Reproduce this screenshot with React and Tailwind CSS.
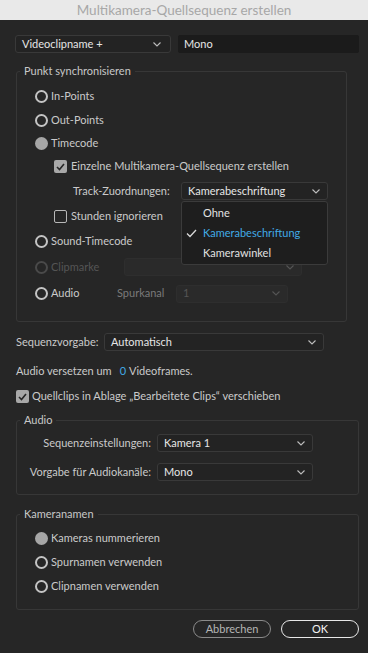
import React from "react";

const Chevron = ({ className = "" }) => (
  <svg width="8" height="5" viewBox="0 0 8 5" className={className}>
    <polyline points="0.5,0.5 4,4 7.5,0.5" fill="none" stroke="currentColor" strokeWidth="1.1" />
  </svg>
);

function Radio({ state = "off" }) {
  if (state === "on") return <span className="block w-[13px] h-[13px] shrink-0 rounded-full bg-[#a6a6a6]" />;
  if (state === "disabled") return <span className="block w-[13px] h-[13px] shrink-0 rounded-full border-2 border-[#4a4a4a]" />;
  return <span className="block w-[13px] h-[13px] shrink-0 rounded-full border-2 border-[#c4c4c4]" />;
}

function Checkbox({ checked }) {
  return checked ? (
    <span className="flex w-[13px] h-[13px] shrink-0 items-center justify-center rounded-[2px] bg-[#a8a8a8]">
      <svg width="9" height="8" viewBox="0 0 9 8">
        <polyline points="1,4 3.5,6.5 8,1" fill="none" stroke="#262626" strokeWidth="1.6" />
      </svg>
    </span>
  ) : (
    <span className="block w-[13px] h-[13px] shrink-0 rounded-[2px] border-[1.5px] border-[#b8b8b8]" />
  );
}

function Select({ value, className = "", disabled = false }) {
  return (
    <div
      className={`flex h-[18px] shrink-0 items-center justify-between rounded-[3px] border pl-[6px] pr-[7px] ${
        disabled ? "border-[#2e2e2e] bg-[#2a2a2a] text-[#555]" : "border-[#393939] bg-[#232323] text-[#e6e6e6]"
      } ${className}`}
    >
      <span className="whitespace-nowrap">{value}</span>
      <Chevron className={disabled ? "text-[#555]" : "text-[#bdbdbd]"} />
    </div>
  );
}

function Fieldset({ legend, className = "", children }) {
  return (
    <fieldset className={`rounded-[3px] border border-[#373737] ${className}`}>
      <legend className="ml-[3px] px-[4px] leading-4 text-[#c8c8c8]">{legend}</legend>
      {children}
    </fieldset>
  );
}

export default function App() {
  return (
    <div className="relative h-[653px] w-[368px] overflow-hidden whitespace-nowrap bg-[#262626] text-[11px] text-[#cacaca] [font-family:Lato,sans-serif]">
      <div className="flex h-[20px] items-center justify-center bg-[#e9e9e9] text-[13.5px] text-[#a7a7a7]">
        Multikamera-Quellsequenz erstellen
      </div>

      <div className="pl-[15px] pr-[9px]">
        <div className="mt-[15px] flex h-[18px] items-center">
          <Select value="Videoclipname +" className="w-[156px] pr-[9px]" />
          <div className="ml-[7px] flex h-[18px] flex-1 items-center rounded-[2px] bg-[#1b1b1b] pl-[6px] text-[#e6e6e6]">Mono</div>
        </div>

        <Fieldset legend="Punkt synchronisieren" className="ml-[1px] mt-[10px] w-[331px] pb-[14px]">
          <div className="pl-[18px] pt-[5px]">
            <div className="flex h-[24px] items-center gap-[3px]">
              <Radio /> <span>In-Points</span>
            </div>
            <div className="flex h-[24px] items-center gap-[3px]">
              <Radio /> <span>Out-Points</span>
            </div>
            <div className="flex h-[23px] items-center gap-[3px]">
              <Radio state="on" /> <span>Timecode</span>
            </div>
            <div className="flex h-[23px] items-center gap-[4px] pl-[19px]">
              <Checkbox checked /> <span>Einzelne Multikamera-Quellsequenz erstellen</span>
            </div>
            <div className="flex h-[26px] items-center pl-[38px]">
              <span className="w-[108px] shrink-0">Track-Zuordnungen:</span>
              <div className="relative w-[147px] shrink-0">
                <Select value="Kamerabeschriftung" />
                <div className="absolute left-0 top-full z-10 mt-[1px] w-full rounded-[3px] border border-[#3b3b3b] bg-[#1e1e1e] py-[1px] text-[#e2e2e2]">
                  <div className="flex h-[20px] items-center pl-[21px]">Ohne</div>
                  <div className="relative flex h-[20px] items-center pl-[21px] text-[#41aae6]">
                    <svg width="11" height="9" viewBox="0 0 11 9" className="absolute left-[4px] top-[6px]">
                      <polyline points="1,4.5 4,7.5 10,1" fill="none" stroke="#d8d8d8" strokeWidth="1.3" />
                    </svg>
                    Kamerabeschriftung
                  </div>
                  <div className="flex h-[20px] items-center pl-[21px]">Kamerawinkel</div>
                </div>
              </div>
            </div>
            <div className="flex h-[25px] items-center gap-[4px] pl-[19px]">
              <Checkbox /> <span>Stunden ignorieren</span>
            </div>
            <div className="flex h-[25px] items-center gap-[3px]">
              <Radio /> <span>Sound-Timecode</span>
            </div>
            <div className="flex h-[26px] items-center">
              <Radio state="disabled" />
              <span className="ml-[3px] w-[73px] shrink-0 text-[#555]">Clipmarke</span>
              <Select value="" disabled className="w-[178px]" />
            </div>
            <div className="flex h-[27px] items-center">
              <Radio />
              <span className="ml-[3px] w-[66px] shrink-0">Audio</span>
              <span className="w-[59px] shrink-0 text-[#7a7a7a]">Spurkanal</span>
              <Select value="1" disabled className="w-[112px] pl-[6px]" />
            </div>
          </div>
        </Fieldset>

        <div className="mt-[11px] flex h-[18px] items-center pl-[1px]">
          <span className="w-[88px] shrink-0">Sequenzvorgabe:</span>
          <Select value="Automatisch" className="w-[220px]" />
        </div>

        <div className="mt-[11px] flex h-[18px] items-center pl-[1px]">
          <span>Audio versetzen um</span>
          <span className="ml-[8px] text-[#41aae6]">0</span>
          <span className="ml-[3px]">Videoframes.</span>
        </div>

        <div className="mt-[7px] flex h-[19px] items-center gap-[3px] pl-[1px]">
          <Checkbox checked />
          <span>Quellclips in Ablage „Bearbeitete Clips“ verschieben</span>
        </div>

        <Fieldset legend="Audio" className="ml-[1px] mt-[6px] pb-[13px]">
          <div className="pt-[6px]">
            <div className="flex h-[18px] items-center">
              <span className="w-[134px] shrink-0 text-right">Sequenzeinstellungen:</span>
              <Select value="Kamera 1" className="ml-[6px] w-[156px]" />
            </div>
            <div className="mt-[11px] flex h-[18px] items-center">
              <span className="w-[134px] shrink-0 text-right">Vorgabe für Audiokanäle:</span>
              <Select value="Mono" className="ml-[6px] w-[156px]" />
            </div>
          </div>
        </Fieldset>

        <Fieldset legend="Kameranamen" className="ml-[1px] mt-[11px] pb-[11px]">
          <div className="pl-[18px] pt-[4px]">
            <div className="flex h-[24px] items-center gap-[3px]">
              <Radio state="on" /> <span>Kameras nummerieren</span>
            </div>
            <div className="flex h-[24px] items-center gap-[3px]">
              <Radio /> <span>Spurnamen verwenden</span>
            </div>
            <div className="flex h-[24px] items-center gap-[3px]">
              <Radio /> <span>Clipnamen verwenden</span>
            </div>
          </div>
        </Fieldset>

        <div className="mt-[10px] flex justify-end gap-[10px]">
          <button className="flex h-[18px] w-[78px] items-center justify-center rounded-full border-[1.5px] border-[#8a8a8a] text-[#b5b5b5]">
            Abbrechen
          </button>
          <button className="flex h-[18px] w-[78px] items-center justify-center rounded-full border-[1.5px] border-[#e8e8e8] text-[#f2f2f2]">
            OK
          </button>
        </div>
      </div>
    </div>
  );
}
